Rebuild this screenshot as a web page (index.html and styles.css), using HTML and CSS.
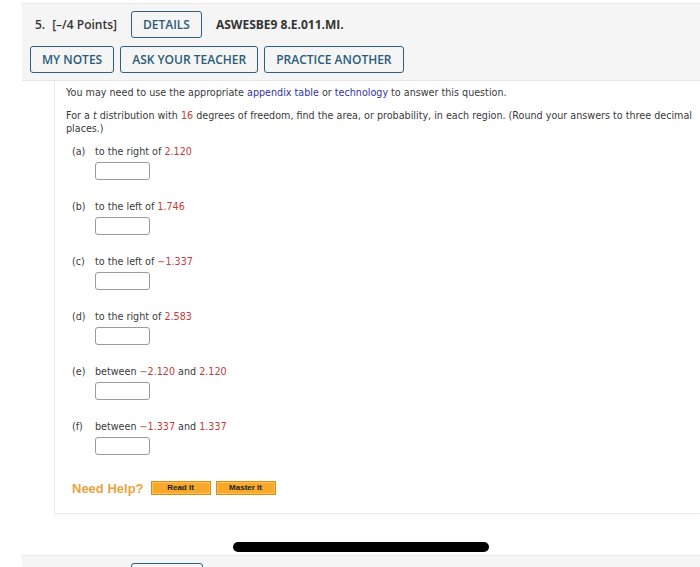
FILE: index.html
```html
<!DOCTYPE html>
<html lang="en">
<head>
<meta charset="utf-8">
<title>Question 5</title>
<link rel="stylesheet" href="styles.css">
</head>
<body>
<div class="page">
  <section class="question">
    <header class="qhead">
      <div class="row">
        <span class="num"><span class="qn">5.</span>[–/4 Points]</span>
        <button class="btn">DETAILS</button>
        <span class="code">ASWESBE9 8.E.011.MI.</span>
      </div>
      <div class="row tools">
        <button class="btn">MY NOTES</button>
        <button class="btn">ASK YOUR TEACHER</button>
        <button class="btn">PRACTICE ANOTHER</button>
      </div>
    </header>
    <div class="qbody">
      <p>You may need to use the appropriate <a class="link">appendix table</a> or <a class="link">technology</a> to answer this question.</p>
      <p>For a <i>t</i> distribution with <span class="val">16</span> degrees of freedom, find the area, or probability, in each region. (Round your answers to three decimal places.)</p>
      <ol class="parts">
        <li class="part"><div class="plabel"><span class="pl">(a)</span><span>to the right of <span class="val">2.120</span></span></div><div class="ans"><span class="box"></span></div></li>
        <li class="part"><div class="plabel"><span class="pl">(b)</span><span>to the left of <span class="val">1.746</span></span></div><div class="ans"><span class="box"></span></div></li>
        <li class="part"><div class="plabel"><span class="pl">(c)</span><span>to the left of <span class="val">−1.337</span></span></div><div class="ans"><span class="box"></span></div></li>
        <li class="part"><div class="plabel"><span class="pl">(d)</span><span>to the right of <span class="val">2.583</span></span></div><div class="ans"><span class="box"></span></div></li>
        <li class="part"><div class="plabel"><span class="pl">(e)</span><span>between <span class="val">−2.120</span> and <span class="val">2.120</span></span></div><div class="ans"><span class="box"></span></div></li>
        <li class="part"><div class="plabel"><span class="pl">(f)</span><span>between <span class="val">−1.337</span> and <span class="val">1.337</span></span></div><div class="ans"><span class="box"></span></div></li>
      </ol>
      <div class="help">
        <span class="help-title">Need Help?</span>
        <button class="hbtn">Read It</button>
        <button class="hbtn">Master It</button>
      </div>
    </div>
  </section>
  <div class="gap"><span class="homebar"></span></div>
  <section class="question">
    <header class="qhead">
      <div class="row next-row">
        <span class="btn btn-stub"></span>
      </div>
    </header>
  </section>
</div>
</body>
</html>
```
FILE: styles.css
```css
html, body {
  margin: 0;
  padding: 0;
  background: #ffffff;
  overflow: hidden;
}
.page {
  padding: 3px 0 0 22px;
}
.qhead {
  background: #f5f5f5;
  border-top: 1px solid #e9e9e9;
  border-bottom: 1px solid #e6e6e6;
  padding: 7px 0 7px 8px;
  display: flex;
  flex-direction: column;
  gap: 8px;
  font-family: "Open Sans", "Liberation Sans", sans-serif;
  font-size: 12px;
  color: #333;
}
.row {
  display: flex;
  align-items: center;
}
.num {
  font-weight: 600;
  margin-left: 5px;
  margin-right: 14px;
  color: #333;
}
.qn {
  margin-right: 7px;
}
.code {
  font-weight: 700;
  margin-left: 14px;
  color: #333;
}
.tools {
  gap: 6px;
}
.btn {
  font-family: "Open Sans", "Liberation Sans", sans-serif;
  font-size: 12px;
  font-weight: 600;
  color: #2b5b7a;
  background: transparent;
  border: 1.5px solid #2f5f7c;
  border-radius: 3px;
  height: 27px;
  padding: 0 11px;
  box-sizing: border-box;
  line-height: 1;
}
.next-row {
  padding-left: 101px;
}
.btn-stub {
  display: block;
  width: 72px;
}
.qbody {
  margin-left: 32px;
  border-left: 1px solid #ececec;
  border-bottom: 1px solid #ececec;
  box-shadow: 0 1px 2px rgba(0,0,0,0.04);
  padding: 5px 8px 18px 11px;
  font-family: "DejaVu Sans", Verdana, sans-serif;
  font-size: 9.6px;
  line-height: 13px;
  color: #3a3a3a;
}
.qbody p {
  margin: 0 0 10px 0;
}
.link {
  color: #33349c;
  text-decoration: none;
}
.val {
  color: #c53a3a;
}
.parts {
  list-style: none;
  margin: 0;
  padding: 0;
}
.part {
  margin-bottom: 20px;
}
.plabel {
  display: flex;
  padding-left: 6px;
}
.pl {
  width: 23px;
}
.ans {
  padding-left: 29px;
  margin-top: 4px;
}
.box {
  display: block;
  width: 55px;
  height: 18px;
  box-sizing: border-box;
  border: 1px solid #9b9b9b;
  border-radius: 3px;
  background: #fff;
}
.help {
  display: flex;
  align-items: center;
  padding-left: 6px;
  margin-top: 26px;
  font-family: "Liberation Sans", Arial, sans-serif;
}
.help-title {
  color: #e9a43e;
  font-weight: 700;
  font-size: 13px;
  margin-right: 7px;
}
.hbtn {
  font-family: "Liberation Sans", Arial, sans-serif;
  font-size: 8px;
  font-weight: 700;
  color: #1d1d1d;
  height: 14px;
  width: 60px;
  padding: 0;
  margin-right: 5px;
  box-sizing: border-box;
  border: 1px solid #d98b16;
  background: #f8a92a;
  box-shadow: inset 0 0 0 1px #fbc25a;
  line-height: 1;
}
.gap {
  height: 41px;
  display: flex;
  justify-content: center;
  align-items: flex-start;
}
.homebar {
  display: block;
  width: 256px;
  height: 10px;
  margin-top: 28px;
  border-radius: 5px;
  background: #000;
}
```
